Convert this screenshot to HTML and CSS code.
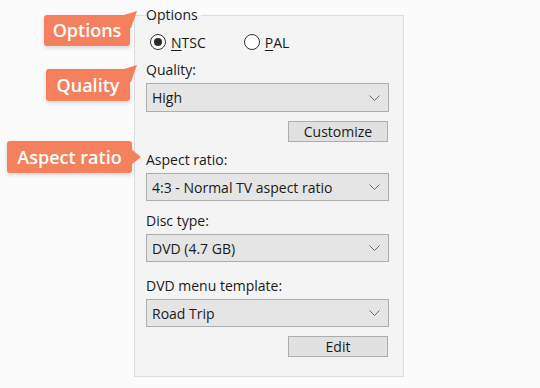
FILE: index.html
```html
<!DOCTYPE html>
<html>
<head>
	<link rel="stylesheet" href="styles.css">
</head>
<body>

	<fieldset class="panel">
		<legend>Options</legend>

		<div class="radios">
			<label class="radio"><span class="dot checked"></span><span><u>N</u>TSC</span></label>
			<label class="radio"><span class="dot"></span><span><u>P</u>AL</span></label>
		</div>

		<div class="label gap-quality">Quality:</div>
		<div class="select tall">High<svg class="chev" width="11" height="6" viewBox="0 0 11 6"><path d="M0.5 0.5 L5.5 5.5 L10.5 0.5" fill="none" stroke="#6a6a6a" stroke-width="1"/></svg></div>
		<div class="buttons"><span class="button">Customize</span></div>

		<div class="label gap-aspect">Aspect ratio:</div>
		<div class="select">4:3 - Normal TV aspect ratio<svg class="chev" width="11" height="6" viewBox="0 0 11 6"><path d="M0.5 0.5 L5.5 5.5 L10.5 0.5" fill="none" stroke="#6a6a6a" stroke-width="1"/></svg></div>

		<div class="label gap-disc">Disc type:</div>
		<div class="select">DVD (4.7 GB)<svg class="chev" width="11" height="6" viewBox="0 0 11 6"><path d="M0.5 0.5 L5.5 5.5 L10.5 0.5" fill="none" stroke="#6a6a6a" stroke-width="1"/></svg></div>

		<div class="label gap-menu">DVD menu template:</div>
		<div class="select">Road Trip<svg class="chev" width="11" height="6" viewBox="0 0 11 6"><path d="M0.5 0.5 L5.5 5.5 L10.5 0.5" fill="none" stroke="#6a6a6a" stroke-width="1"/></svg></div>
		<div class="buttons"><span class="button">Edit</span></div>
	</fieldset>

	<div class="callout up c-options">Options</div>
	<div class="callout up c-quality">Quality</div>
	<div class="callout side c-aspect">Aspect ratio</div>

</body>
</html>
```

FILE: styles.css
```css
body {
  margin: 0;
  background-color: #fbfbfb;
  font-family: "Open Sans", "Noto Sans", sans-serif;
  font-size: 14px;
  color: #1a1a1a;
}

.panel {
  box-sizing: border-box;
  width: 270px;
  height: 371px;
  margin: 6px 0 0 134px;
  padding: 0 14px 0 11px;
  border: 1px solid #dcdcdc;
  background-color: #f4f4f4;
}

.panel legend {
  padding: 0 3px 0 0;
  line-height: 18px;
}

.radios {
  display: flex;
  align-items: center;
  margin-top: 9px;
  padding-left: 4px;
  height: 18px;
}

.radio {
  display: flex;
  align-items: center;
  gap: 5px;
  margin-right: 38px;
}

.radio u {
  text-underline-offset: 2px;
}

.dot {
  box-sizing: border-box;
  width: 16px;
  height: 16px;
  border: 1.5px solid #333;
  border-radius: 50%;
  background-color: #fff;
  display: flex;
  align-items: center;
  justify-content: center;
}

.dot.checked::after {
  content: "";
  width: 8px;
  height: 8px;
  border-radius: 50%;
  background-color: #2a2a2a;
}

.label {
  line-height: 18px;
}

.gap-quality { margin-top: 10px; }
.gap-aspect { margin-top: 9px; }
.gap-disc { margin-top: 11px; }
.gap-menu { margin-top: 15px; }

.select {
  box-sizing: border-box;
  display: flex;
  align-items: center;
  justify-content: space-between;
  height: 28px;
  margin-top: 4px;
  padding: 0 8px 0 5px;
  border: 1px solid #adadad;
  background-color: #e5e5e5;
}

.select.tall {
  height: 29px;
}

.buttons {
  display: flex;
  justify-content: flex-end;
  margin-top: 9px;
  padding-right: 1px;
}

.button {
  box-sizing: border-box;
  width: 100px;
  height: 21px;
  line-height: 19px;
  text-align: center;
  border: 1px solid #adadad;
  background-color: #e1e1e1;
}

.callout {
  position: absolute;
  box-sizing: border-box;
  height: 32px;
  line-height: 32px;
  text-align: center;
  color: #fff;
  font-size: 18px;
  font-weight: 600;
  background-color: #f4805e;
  border-radius: 3px;
  box-shadow: 0 2px 4px rgba(0, 0, 0, 0.15);
}

.callout::after {
  content: "";
  position: absolute;
  background-color: #f4805e;
}

.callout.up::after {
  left: calc(100% - 6px);
  top: -4px;
  width: 13px;
  height: 17px;
  clip-path: polygon(0 4px, 100% 0, 7px 100%, 0 100%);
}

.callout.side::after {
  left: calc(100% - 1px);
  top: 8px;
  width: 10px;
  height: 16px;
  clip-path: polygon(0 0, 100% 50%, 0 100%);
}

.c-options {
  left: 44px;
  top: 15px;
  width: 86px;
  height: 31px;
  line-height: 31px;
}

.c-quality {
  left: 46px;
  top: 69px;
  width: 84px;
}

.c-aspect {
  left: 7px;
  top: 141px;
  width: 125px;
}
```
